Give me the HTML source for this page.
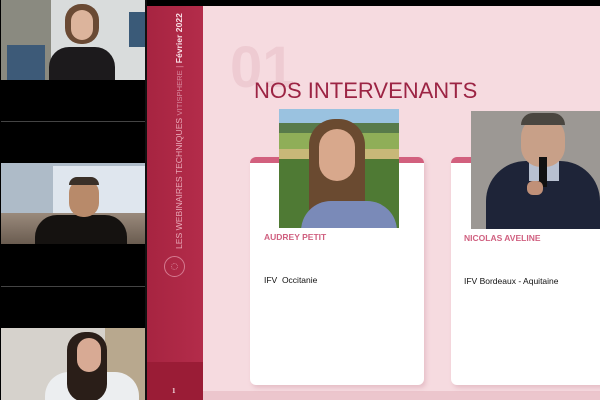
<!DOCTYPE html>
<html><head><meta charset="utf-8"><style>
*{margin:0;padding:0;box-sizing:border-box}
body{width:600px;height:400px;overflow:hidden;background:#000;position:relative;font-family:"Liberation Sans",sans-serif}
.a{position:absolute}
</style></head><body>
<div class="a" style="left:0;top:0;width:146px;height:400px;background:#000"></div>
<div class="a" style="left:1px;top:0;width:144px;height:80px;background:#d9dcdc;overflow:hidden">
  <div class="a" style="left:0;top:0;width:50px;height:80px;background:#8a8a80"></div>
  <div class="a" style="left:6px;top:45px;width:38px;height:35px;background:#3d5a78"></div>
  <div class="a" style="left:128px;top:12px;width:16px;height:35px;background:#3a5a78"></div>
  <div class="a" style="left:48px;top:47px;width:66px;height:40px;border-radius:20px 20px 0 0;background:#1c1a1c"></div>
  <div class="a" style="left:64px;top:4px;width:34px;height:40px;border-radius:16px;background:#6a4a34"></div>
  <div class="a" style="left:70px;top:10px;width:22px;height:30px;border-radius:11px;background:#dcb49c"></div>
</div>
<div class="a" style="left:1px;top:121px;width:144px;height:1px;background:#444"></div>
<div class="a" style="left:1px;top:163px;width:144px;height:81px;background:#aebbc8;overflow:hidden">
  <div class="a" style="left:52px;top:3px;width:92px;height:78px;background:#dfe6ee"></div>
  <div class="a" style="left:0;top:50px;width:144px;height:31px;background:linear-gradient(#9a8a7c,#6a5c50)"></div>
  <div class="a" style="left:34px;top:52px;width:92px;height:40px;border-radius:22px 22px 0 0;background:#151210"></div>
  <div class="a" style="left:68px;top:16px;width:30px;height:38px;border-radius:14px;background:#b88a6a"></div>
  <div class="a" style="left:68px;top:14px;width:30px;height:8px;border-radius:8px 8px 0 0;background:#3a3028"></div>
</div>
<div class="a" style="left:1px;top:286px;width:144px;height:1px;background:#444"></div>
<div class="a" style="left:1px;top:328px;width:144px;height:72px;background:#d6d2cc;overflow:hidden">
  <div class="a" style="left:104px;top:0;width:40px;height:72px;background:#b8a88e"></div>
  <div class="a" style="left:44px;top:44px;width:94px;height:40px;border-radius:24px 24px 0 0;background:#eceef0"></div>
  <div class="a" style="left:66px;top:4px;width:40px;height:70px;border-radius:18px;background:#2a1e18"></div>
  <div class="a" style="left:76px;top:10px;width:24px;height:34px;border-radius:12px;background:#d8aa94"></div>
</div>
<div class="a" style="left:145px;top:0;width:2px;height:400px;background:#111"></div>
<div class="a" style="left:147px;top:6px;width:453px;height:394px;background:#f6dbe0"></div>
<div class="a" style="left:203px;top:391px;width:397px;height:9px;background:#ecc6cd"></div>
<div class="a" style="left:147px;top:6px;width:56px;height:394px;background:linear-gradient(90deg,#a72441,#b32c4a)"></div>
<div class="a" style="left:147px;top:362px;width:56px;height:38px;background:#9a1c36"></div>
<div class="a" style="left:172px;top:387px;color:#f5e0e4;font-size:7px;font-family:'Liberation Serif',serif;font-weight:bold">1</div>
<div class="a" style="left:174px;top:249px;transform-origin:0 0;transform:rotate(-90deg);white-space:nowrap;font-size:8.6px;line-height:10px;color:#e8a8b6">LES WEBINAIRES TECHNIQUES <span style="font-size:7.6px;color:#d7889c">VITISPHERE</span> <span style="color:#e08aa0">|</span> <b style="color:#f7dfe5">Février 2022</b></div>
<div class="a" style="left:164px;top:256px;width:21px;height:21px;border:1.5px solid #d57a90;border-radius:50%"></div>
<div class="a" style="left:171px;top:263px;width:7px;height:7px;border:1px dotted #d57a90;border-radius:50%"></div>
<div class="a" style="left:230px;top:38px;font-size:58px;font-weight:bold;color:#eecbd2;line-height:60px">01</div>
<div class="a" style="left:254px;top:78px;font-size:22px;color:#9c2444;line-height:26px">NOS INTERVENANTS</div>
<div class="a" style="left:250px;top:157px;width:174px;height:228px;background:#fff;border-radius:6px;box-shadow:2px 3px 4px rgba(200,140,155,.35);border-top:6px solid #d2607e"></div>
<div class="a" style="left:279px;top:109px;width:120px;height:119px;overflow:hidden;background:#9ac2e0">
  <div class="a" style="left:0;top:14px;width:120px;height:10px;background:#587a4a"></div>
  <div class="a" style="left:0;top:24px;width:120px;height:30px;background:#8fae58"></div>
  <div class="a" style="left:0;top:40px;width:120px;height:10px;background:#c8b878"></div>
  <div class="a" style="left:0;top:50px;width:120px;height:69px;background:#4f7a34"></div>
  <div class="a" style="left:30px;top:10px;width:56px;height:109px;border-radius:26px 26px 0 0;background:#6a4a30"></div>
  <div class="a" style="left:22px;top:92px;width:96px;height:40px;border-radius:30px 30px 0 0;background:#7a8ab8"></div>
  <div class="a" style="left:40px;top:20px;width:36px;height:52px;border-radius:18px;background:#d8a88c"></div>
</div>
<div class="a" style="left:264px;top:232px;font-size:8.5px;font-weight:bold;color:#d06080">AUDREY PETIT</div>
<div class="a" style="left:264px;top:275px;font-size:8.5px;color:#111">IFV&nbsp; Occitanie</div>
<div class="a" style="left:451px;top:157px;width:160px;height:228px;background:#fff;border-radius:6px;box-shadow:2px 3px 4px rgba(200,140,155,.35);border-top:6px solid #d2607e"></div>
<div class="a" style="left:471px;top:111px;width:129px;height:118px;overflow:hidden;background:#9c9894">
  <div class="a" style="left:15px;top:50px;width:114px;height:80px;border-radius:40px 40px 0 0;background:#1e2438"></div>
  <div class="a" style="left:58px;top:50px;width:30px;height:20px;background:#b8c0d0"></div>
  <div class="a" style="left:50px;top:6px;width:44px;height:50px;border-radius:20px;background:#c8a088"></div>
  <div class="a" style="left:50px;top:2px;width:44px;height:12px;border-radius:14px 14px 0 0;background:#4a4640"></div>
  <div class="a" style="left:68px;top:46px;width:8px;height:30px;background:#111"></div>
  <div class="a" style="left:56px;top:70px;width:16px;height:14px;border-radius:6px;background:#c09078"></div>
</div>
<div class="a" style="left:464px;top:233px;font-size:8.5px;font-weight:bold;color:#d06080">NICOLAS AVELINE</div>
<div class="a" style="left:464px;top:276px;font-size:8.5px;color:#111">IFV Bordeaux - Aquitaine</div>
</body></html>
